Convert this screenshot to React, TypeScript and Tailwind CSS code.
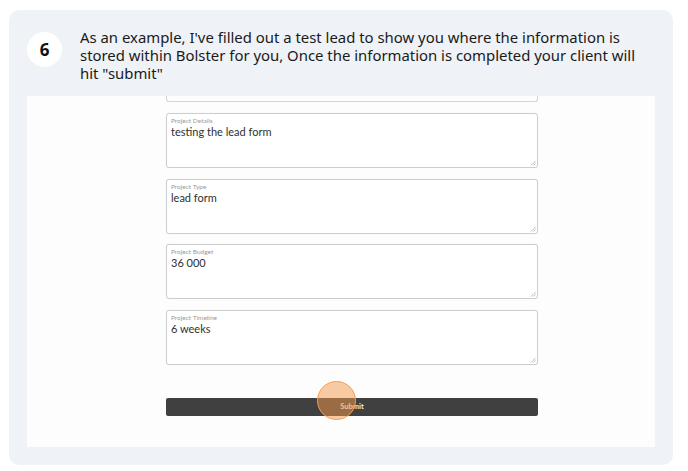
import type { ReactNode } from 'react'

function ResizeGrip() {
  return (
    <svg width="6" height="6" viewBox="0 0 6 6" className="absolute bottom-[1px] right-[1px]">
      <path d="M5.5 1 L1 5.5 M5.5 3.5 L3.5 5.5" stroke="#a8a8a8" strokeWidth="0.8" />
    </svg>
  )
}

function Field({ label, value }: { label: string; value: ReactNode }) {
  return (
    <div className="relative h-[55px] rounded-[3px] border border-[#cdcdcd] bg-white px-[4px] pt-[2px] shadow-[0_0_1px_rgba(0,0,0,0.08)]">
      <div className="text-[6.5px] leading-[9px] text-[#9b9b9b]">{label}</div>
      <div className="text-[11px] leading-[13px] text-[#2f2f2f]">{value}</div>
      <ResizeGrip />
    </div>
  )
}

export default function App() {
  return (
    <div className="h-[471px] w-[688px] bg-white pb-[6px] pl-[9px] pr-[15px] pt-[10px]">
      <div className="flex h-[455px] flex-col rounded-[10px] bg-[#eff2f7]" style={{ fontFamily: '"Noto Sans", sans-serif' }}>
        {/* Step header */}
        <div className="flex h-[86px] items-start pl-[18px] pr-[18px] pt-[18px]">
          <div className="mt-[4px] flex h-[35px] w-[35px] shrink-0 items-center justify-center rounded-full bg-white text-[17px] font-bold text-[#111]">
            6
          </div>
          <p className="ml-[18px] text-[14.9px] leading-[18px] text-[#1a1a1a]">
            As an example, I've filled out a test lead to show you where the information is stored within Bolster for you, Once the information is completed your client will hit "submit"
          </p>
        </div>

        {/* Screenshot */}
        <div className="mx-[18px] mb-[18px] flex-1 overflow-hidden bg-[#fdfdfd] pl-[139px] pr-[117px]" style={{ fontFamily: 'Lato, sans-serif' }}>
          <div className="h-[6px] rounded-b-[3px] border-x border-b border-[#d4d4d4]" />
          <div className="mt-[11px] flex flex-col gap-[10.5px]">
            <Field label="Project Details" value="testing the lead form" />
            <Field label="Project Type" value="lead form" />
            <Field label="Project Budget" value="36 000" />
            <Field label="Project Timeline" value="6 weeks" />
          </div>
          <div className="relative mt-[33px] flex h-[18px] items-center justify-center rounded-[2px] bg-[#404040] text-[7.5px] font-bold text-[#ececec]">
            Submit
            <div className="absolute left-[151px] top-[-17px] h-[39px] w-[39px] rounded-full border-[1.5px] border-[#f2a04f] bg-[rgba(242,152,72,0.5)]" />
          </div>
        </div>
      </div>
    </div>
  )
}
